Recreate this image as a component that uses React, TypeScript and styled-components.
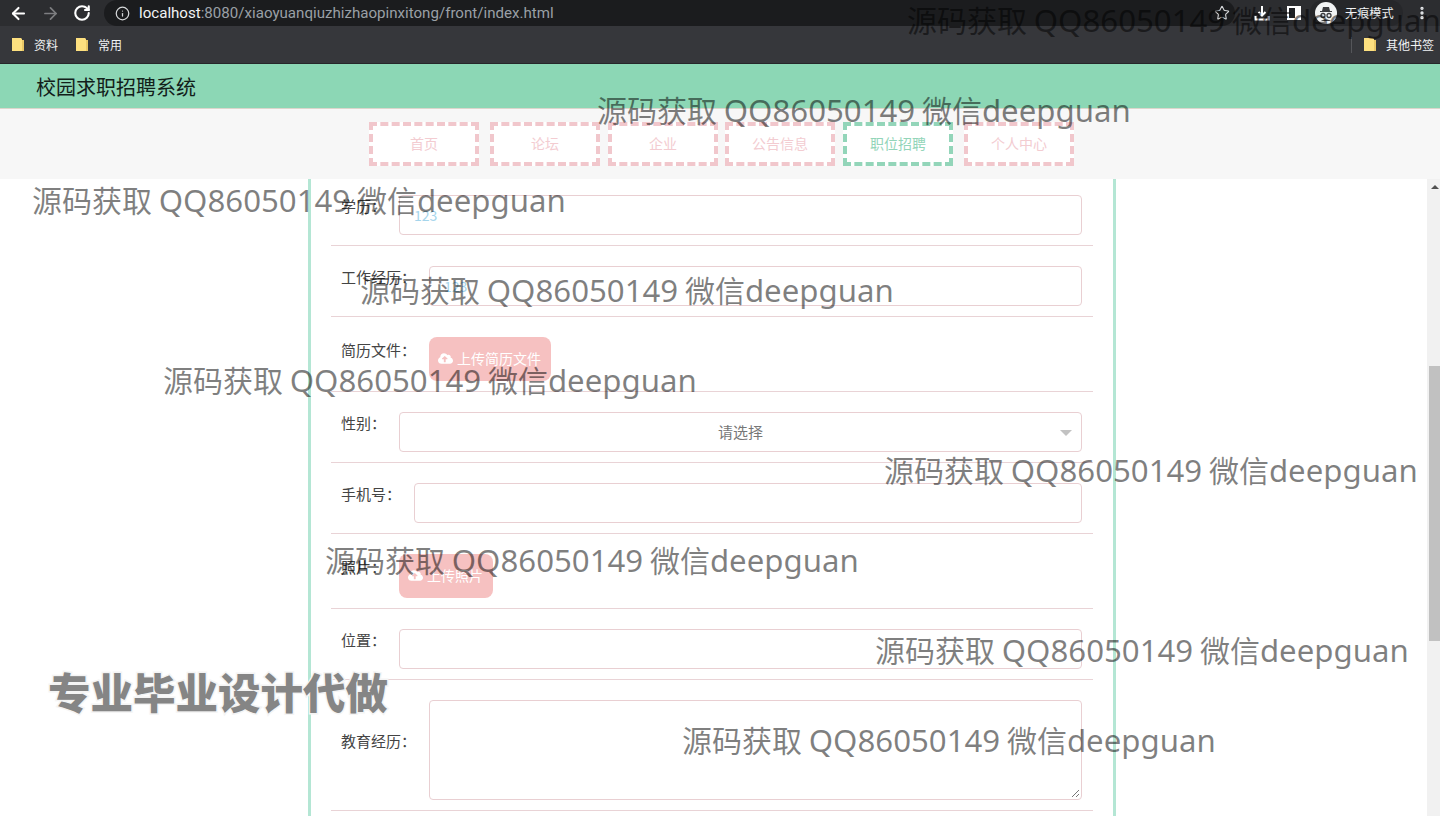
import React from "react";
import styled, { createGlobalStyle } from "styled-components";
import { ArrowLeft, ArrowRight, RotateCw, Info, Star, EllipsisVertical } from "lucide-react";
import { FaCloudUploadAlt } from "react-icons/fa";

const Global = createGlobalStyle`
  html, body { margin: 0; padding: 0; height: 816px; overflow: hidden; background: #fff; }
  * { box-sizing: border-box; }
  body { font-family: "Noto Sans CJK SC", "Liberation Sans", sans-serif; }
`;

const Shell = styled.div`
  position: relative;
  width: 1440px;
  height: 816px;
  overflow: hidden;
  display: flex;
  flex-direction: column;
`;

const Toolbar = styled.div`
  height: 26px;
  flex: none;
  background: #2c2d30;
  display: flex;
  align-items: center;
  color: #fff;
`;
const NavButtons = styled.div`
  width: 104px;
  flex: none;
  display: flex;
  align-items: center;
  gap: 13px;
  padding-left: 9px;
`;
const AddressBar = styled.div`
  width: 1131px;
  height: 26px;
  flex: none;
  background: #1b1c1e;
  border-radius: 13px;
  display: flex;
  align-items: center;
  gap: 9px;
  padding: 0 5px 0 11px;
  font-family: "Roboto", "Liberation Sans", sans-serif;
  font-size: 15.1px;
  color: #9aa0a6;
`;
const Host = styled.span`
  color: #f1f3f4;
`;
const StarSlot = styled.div`
  margin-left: auto;
  display: flex;
  color: #d6d8da;
`;
const ToolbarRight = styled.div`
  flex: 1;
  display: flex;
  align-items: center;
  padding-left: 19px;
  color: #e8eaed;
`;
const SideSlot = styled.div`
  margin-left: 17px;
  display: flex;
`;
const IncognitoPill = styled.div`
  margin-left: 9px;
  height: 26px;
  padding: 0 9px 0 5px;
  border-radius: 13px;
  background: #26272a;
  display: flex;
  align-items: center;
  gap: 8px;
`;
const IncognitoLabel = styled.span`
  font-size: 12.2px;
  color: #f1f3f4;
`;
const MoreSlot = styled.div`
  margin-left: 11px;
  display: flex;
`;

const Bookmarks = styled.div`
  height: 38px;
  flex: none;
  background: #36373b;
  display: flex;
  align-items: center;
  padding: 0 6px 0 12px;
  font-size: 12px;
  color: #f1f3f4;
  border-bottom: 1px solid #26272a;
`;
const Bookmark = styled.div<{ $gap?: number }>`
  display: flex;
  align-items: center;
  gap: 10px;
  margin-left: ${(p) => p.$gap ?? 0}px;
`;
const BookmarkSep = styled.div`
  width: 1px;
  height: 16px;
  background: #55565a;
  margin-left: auto;
  margin-right: 12px;
`;

const Header = styled.div`
  height: 45px;
  flex: none;
  background: #8cd7b5;
  display: flex;
  align-items: center;
  padding-left: 36px;
  font-size: 20px;
  color: #12201a;
  border-bottom: 1px solid #dcd6cc;
`;

const Nav = styled.div`
  height: 70px;
  flex: none;
  background: #f7f7f7;
  display: flex;
  padding: 13px 0 0 369px;
`;
const NavItem = styled.div<{ $active?: boolean; $gap?: number }>`
  width: 110px;
  height: 44px;
  flex: none;
  margin-left: ${(p) => p.$gap ?? 0}px;
  background: #fff;
  border: 4px dashed ${(p) => (p.$active ? "#93d5b9" : "#f1c7cc")};
  color: ${(p) => (p.$active ? "#93d5b9" : "#f3ccd1")};
  font-size: 14px;
  padding-bottom: 2px;
  display: flex;
  align-items: center;
  justify-content: center;
`;

const Body = styled.div`
  flex: 1;
  min-height: 0;
  display: flex;
  overflow: hidden;
`;
const Page = styled.div`
  flex: 1;
  min-width: 0;
  background: #fff;
  padding-left: 308px;
  display: flex;
`;
const Card = styled.div`
  width: 808px;
  flex: none;
  background: #fff;
  border-left: 3px solid #b4e6d4;
  border-right: 3px solid #b4e6d4;
  padding: 0 20px;
`;
const Row = styled.div<{ $first?: boolean }>`
  display: flex;
  align-items: center;
  padding: ${(p) => (p.$first ? 16 : 20)}px 11px 10px 0;
  border-bottom: 1px solid #e9d3d6;
`;
const Label = styled.label`
  flex: none;
  padding: 0 13px 0 10px;
  margin-bottom: 19px;
  font-size: 15px;
  line-height: 20px;
  color: #444;
`;
const Field = styled.div`
  flex: 1;
  min-width: 0;
  height: 40px;
  border: 1px solid #e9cfd2;
  border-radius: 4px;
  background: #fff;
  padding: 0 14px;
  display: flex;
  align-items: center;
  font-size: 14px;
  color: #a5d5ec;
`;
const SelectField = styled(Field)`
  position: relative;
  justify-content: center;
  font-size: 15px;
  padding-bottom: 2px;
  color: #777;
`;
const Caret = styled.span`
  position: absolute;
  right: 9px;
  top: 17px;
  width: 0;
  height: 0;
  border-left: 6px solid transparent;
  border-right: 6px solid transparent;
  border-top: 6px solid #c2c2c2;
`;
const TextArea = styled(Field)`
  height: 100px;
  position: relative;
`;
const Grip = styled.svg`
  position: absolute;
  right: 1px;
  bottom: 1px;
`;
const Upload = styled.div`
  height: 44px;
  flex: none;
  padding: 0 10px 2px 9px;
  border-radius: 8px;
  background: #f6c1c1;
  color: #fff;
  font-size: 14px;
  display: flex;
  align-items: center;
  gap: 4px;
`;
const Scrollbar = styled.div`
  width: 13px;
  flex: none;
  background: #f1f1f1;
  padding: 6px 0 0 2px;
  display: flex;
  flex-direction: column;
  align-items: flex-start;
`;
const ArrowUp = styled.span`
  width: 0;
  height: 0;
  margin-left: 2px;
  border-left: 4px solid transparent;
  border-right: 4px solid transparent;
  border-bottom: 4px solid #505050;
`;
const Thumb = styled.div`
  width: 11px;
  height: 275px;
  margin-top: 177px;
  background: #c1c1c1;
`;

const Watermark = styled.div<{ $x: number; $y: number }>`
  position: absolute;
  left: ${(p) => p.$x}px;
  top: ${(p) => p.$y}px;
  height: 40px;
  line-height: 40px;
  white-space: nowrap;
  font-family: "Noto Sans CJK SC", sans-serif;
  font-size: 30px;
  color: rgba(0, 0, 0, 0.5);
  pointer-events: none;
`;
const Latin = styled.span`
  font-family: "Noto Sans", "Open Sans", sans-serif;
  font-size: 31.2px;
`;
const Stamp = styled.div`
  position: absolute;
  left: 48px;
  top: 663px;
  white-space: nowrap;
  font-family: "Noto Sans CJK SC", sans-serif;
  font-weight: 900;
  font-size: 42.5px;
  line-height: 56px;
  color: #858585;
  -webkit-text-stroke: 3px #f4f4f4;
  paint-order: stroke fill;
  pointer-events: none;
`;

const Folder = () => (
  <svg width="12" height="15" viewBox="0 0 12 15">
    <path d="M0 1h9l1 1v12H0z" fill="#fde07f" />
    <path d="M10 3h2v11h-2z" fill="#e9c766" />
  </svg>
);

const marks = [
  [907, -1],
  [597, 89],
  [32, 179],
  [360, 269],
  [163, 359],
  [884, 449],
  [325, 539],
  [875, 629],
  [682, 719],
];
const navs = [
  { t: "首页", g: 0 },
  { t: "论坛", g: 11 },
  { t: "企业", g: 8 },
  { t: "公告信息", g: 7 },
  { t: "职位招聘", g: 8, a: true },
  { t: "个人中心", g: 11 },
];

export default function App() {
  return (
    <Shell>
      <Global />
      <Toolbar>
        <NavButtons>
          <ArrowLeft size={19} strokeWidth={2.6} color="#fff" />
          <ArrowRight size={19} strokeWidth={2.2} color="#7d7e81" />
          <RotateCw size={18} strokeWidth={2.8} color="#fff" />
        </NavButtons>
        <AddressBar>
          <Info size={15} color="#d6d8da" />
          <span>
            <Host>localhost</Host>:8080/xiaoyuanqiuzhizhaopinxitong/front/index.html
          </span>
          <StarSlot>
            <Star size={16} strokeWidth={1.6} />
          </StarSlot>
        </AddressBar>
        <ToolbarRight>
          <svg width="16" height="16" viewBox="0 0 16 16" fill="none" stroke="#fff" strokeWidth="2">
            <path d="M8 1v9M4.500 7 8 10.500 11.500 7M1.500 11v3.500h13V11" />
          </svg>
          <SideSlot>
            <svg width="14" height="14" viewBox="0 0 14 14">
              <path d="M1 1h12v12H1z" fill="#202124" stroke="#fff" strokeWidth="2" />
              <path d="M8 1h5v12H8z" fill="#fff" />
            </svg>
          </SideSlot>
          <IncognitoPill>
            <svg width="22" height="22" viewBox="0 0 22 22">
              <circle cx="11" cy="11" r="11" fill="#f1f3f4" />
              <path d="M7 9l1-4h6l1 4h2v1H5V9z" fill="#3a3b3e" />
              <circle cx="8" cy="13.500" r="2" fill="none" stroke="#3a3b3e" strokeWidth="1.300" />
              <circle cx="14" cy="13.500" r="2" fill="none" stroke="#3a3b3e" strokeWidth="1.300" />
              <path d="M6 19c2-2 8-2 10 0z" fill="#3a3b3e" />
            </svg>
            <IncognitoLabel>无痕模式</IncognitoLabel>
          </IncognitoPill>
          <MoreSlot>
            <EllipsisVertical size={16} strokeWidth={3} />
          </MoreSlot>
        </ToolbarRight>
      </Toolbar>
      <Bookmarks>
        <Bookmark>
          <Folder />
          资料
        </Bookmark>
        <Bookmark $gap={18}>
          <Folder />
          常用
        </Bookmark>
        <BookmarkSep />
        <Bookmark>
          <Folder />
          其他书签
        </Bookmark>
      </Bookmarks>
      <Header>校园求职招聘系统</Header>
      <Nav>
        {navs.map((n) => (
          <NavItem key={n.t} $active={n.a} $gap={n.g}>
            {n.t}
          </NavItem>
        ))}
      </Nav>
      <Body>
        <Page>
          <Card>
            <Row $first>
              <Label>学历：</Label>
              <Field>123</Field>
            </Row>
            <Row>
              <Label>工作经历：</Label>
              <Field>123</Field>
            </Row>
            <Row>
              <Label>简历文件：</Label>
              <Upload>
                <FaCloudUploadAlt size={15} />
                上传简历文件
              </Upload>
            </Row>
            <Row>
              <Label>性别：</Label>
              <SelectField>
                请选择
                <Caret />
              </SelectField>
            </Row>
            <Row>
              <Label>手机号：</Label>
              <Field />
            </Row>
            <Row>
              <Label>照片：</Label>
              <Upload>
                <FaCloudUploadAlt size={15} />
                上传照片
              </Upload>
            </Row>
            <Row>
              <Label>位置：</Label>
              <Field />
            </Row>
            <Row>
              <Label>教育经历：</Label>
              <TextArea>
                <Grip width="10" height="10" viewBox="0 0 10 10" stroke="#777" strokeWidth="1">
                  <path d="M9 2 2 9M9 6 6 9" />
                </Grip>
              </TextArea>
            </Row>
          </Card>
        </Page>
        <Scrollbar>
          <ArrowUp />
          <Thumb />
        </Scrollbar>
      </Body>
      {marks.map(([x, y]) => (
        <Watermark key={x} $x={x} $y={y}>
          源码获取 <Latin>QQ86050149</Latin> 微信<Latin>deepguan</Latin>
        </Watermark>
      ))}
      <Stamp>专业毕业设计代做</Stamp>
    </Shell>
  );
}
